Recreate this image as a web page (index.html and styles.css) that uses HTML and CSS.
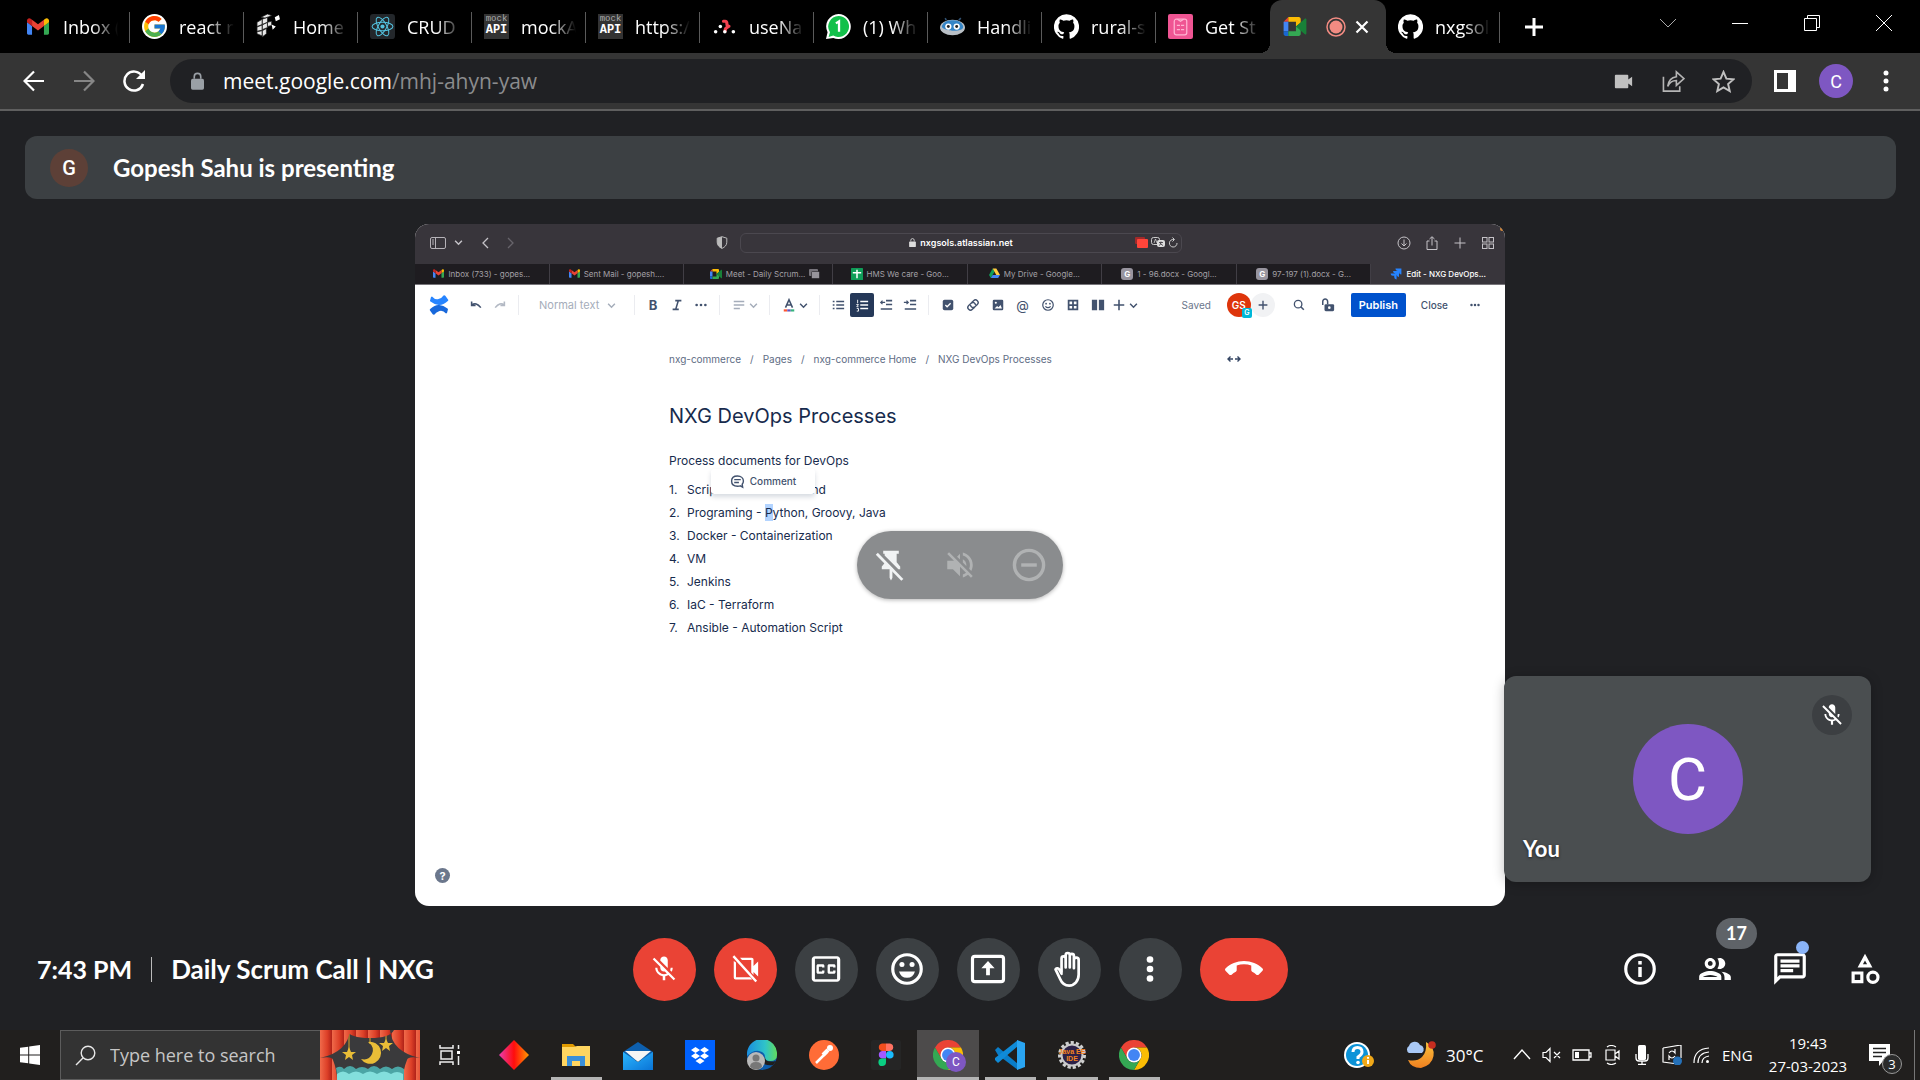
FILE: index.html
```html
<!DOCTYPE html>
<html lang="en">
<head>
<meta charset="utf-8">
<title>Meet - Daily Scrum Call | NXG</title>
<link rel="stylesheet" href="styles.css">
</head>
<body>
<svg class="sprite" aria-hidden="true">
  <defs>
    <linearGradient id="g-sky" x1="0" y1="0" x2="1" y2="1"><stop offset="0" stop-color="#2bb7ff"/><stop offset="1" stop-color="#0a74d6"/></linearGradient>
    <linearGradient id="g-edge" x1="0" y1="0" x2="1" y2="0"><stop offset="0" stop-color="#1a8fe0"/><stop offset=".6" stop-color="#2fc3c9"/><stop offset="1" stop-color="#62dc5c"/></linearGradient>
    <linearGradient id="g-diamond" x1="0" y1="0" x2="1" y2="0"><stop offset="0" stop-color="#e83db0"/><stop offset=".5" stop-color="#ff0d0d"/><stop offset="1" stop-color="#ff9a00"/></linearGradient>
    <linearGradient id="g-moon" x1="0" y1="0" x2="0" y2="1"><stop offset="0" stop-color="#fbc23c"/><stop offset="1" stop-color="#f08020"/></linearGradient>
    <linearGradient id="g-drape" x1="0" y1="0" x2="12" y2="0" gradientUnits="userSpaceOnUse" spreadMethod="repeat"><stop offset="0" stop-color="#f06a4a"/><stop offset=".6" stop-color="#dd4028"/><stop offset="1" stop-color="#b02218"/></linearGradient>
  </defs>
  <symbol id="gmail" viewBox="0 0 24 18"><path fill="#4285f4" d="M0 3v13.400c0 .9.700 1.600 1.600 1.600H5.500V8.500L0 4z"/><path fill="#34a853" d="M18.500 18h3.900c.9 0 1.600-.7 1.600-1.600V4l-5.500 4.500z"/><path fill="#fbbc04" d="M18.500 1.600V8.500L24 4.400V2.500C24 .2 21.500-1 19.600.700z"/><path fill="#ea4335" d="M5.500 8.500V1.600L12 6.500l6.500-4.900V8.500L12 13.400z"/><path fill="#c5221f" d="M0 2.500v1.900l5.500 4.100V1.600L4.400.700C2.500-1 0 .2 0 2.500z"/></symbol>
  <symbol id="google" viewBox="0 0 48 48"><circle cx="24" cy="24" r="24" fill="#fff"/><path fill="#FFC107" d="M43.611 20.083H42V20H24v8h11.303c-1.649 4.657-6.080 8-11.303 8-6.627 0-12-5.373-12-12s5.373-12 12-12c3.059 0 5.842 1.154 7.961 3.039l5.657-5.657C34.046 6.053 29.268 4 24 4 12.955 4 4 12.955 4 24s8.955 20 20 20 20-8.955 20-20c0-1.341-.138-2.650-.389-3.917z"/><path fill="#FF3D00" d="m6.306 14.691 6.571 4.819C14.655 15.108 18.961 12 24 12c3.059 0 5.842 1.154 7.961 3.039l5.657-5.657C34.046 6.053 29.268 4 24 4 16.318 4 9.656 8.337 6.306 14.691z"/><path fill="#4CAF50" d="M24 44c5.166 0 9.860-1.977 13.409-5.192l-6.190-5.238A11.910 11.910 0 0 1 24 36c-5.202 0-9.619-3.317-11.283-7.946l-6.522 5.025C9.505 39.556 16.227 44 24 44z"/><path fill="#1976D2" d="M43.611 20.083H42V20H24v8h11.303a12.040 12.040 0 0 1-4.087 5.571l6.190 5.238C36.971 39.205 44 34 44 24c0-1.341-.138-2.650-.389-3.917z"/></symbol>
  <symbol id="cube" viewBox="0 0 24 24"><g fill="#e8e8e8" stroke="#222" stroke-width=".7"><path d="M1 8l5-3v5l-5 2zM6 5l5-2v5L6 10zM11 8l4-1v4l-4 1zM1 12.500l5-2v5l-5 1zM6 10.500l5-2.500v5l-5 2zM1 17l5-1v5l-5-2zM6 16l4-2v5l-4 3zM5 3l6-3 4 1.500L9 4z"/></g><path fill="#fff" d="M18 3l4-2 1 4-4 2zM15 10l4 2-3 3z"/></symbol>
  <symbol id="react" viewBox="0 0 24 24"><rect width="24" height="24" rx="3" fill="#23272b"/><g fill="none" stroke="#53c1de" stroke-width="1"><ellipse cx="12" cy="12" rx="10" ry="4"/><ellipse cx="12" cy="12" rx="10" ry="4" transform="rotate(60 12 12)"/><ellipse cx="12" cy="12" rx="10" ry="4" transform="rotate(120 12 12)"/></g><circle cx="12" cy="12" r="2" fill="#53c1de"/></symbol>
  <symbol id="router" viewBox="0 0 24 24"><path d="M11 7h1.500q1.800 0 1.800 2.300t2 2.500M12.500 16.500q0-3.500 3.500-4.500" fill="none" stroke="#f44250" stroke-width="3" stroke-linecap="round"/><g fill="#fff"><circle cx="3.500" cy="17" r="1.700"/><circle cx="8" cy="12" r="1.700"/><circle cx="12.300" cy="17" r="1.700"/><circle cx="20.500" cy="17" r="1.700"/></g></symbol>
  <symbol id="whatsapp" viewBox="0 0 24 24"><path fill="#fff" d="M12 0a12 12 0 1 1-5 23L0 24l1.500-6.500A12 12 0 0 1 12 0z"/><path fill="#12c04a" d="M12 2a10 10 0 1 1-5 18.600L2.500 22l1.300-4.500A10 10 0 0 1 12 2z"/><path d="M9.500 9l3-2v10" fill="none" stroke="#fff" stroke-width="2.200"/></symbol>
  <symbol id="robot" viewBox="0 0 24 24"><path d="M6 6L5 4M18 6l2-2" stroke="#357" stroke-width="1.500"/><ellipse cx="12" cy="13" rx="12" ry="7.500" fill="#b9bfc5"/><path d="M2 11q2-5 10-5t10 5-10 5S0 15 2 11z" fill="#3585c6"/><circle cx="8" cy="12" r="3" fill="#fff"/><circle cx="16" cy="12" r="3" fill="#fff"/><circle cx="8" cy="12" r="1.400" fill="#222"/><circle cx="16" cy="12" r="1.400" fill="#222"/></symbol>
  <symbol id="github" viewBox="0 0 24 24"><path fill="#fff" d="M12 .3a12 12 0 0 0-3.800 23.400c.6.100.8-.3.800-.6v-2c-3.300.7-4-1.600-4-1.600-.6-1.400-1.400-1.800-1.400-1.800-1-.7.100-.7.100-.7 1.200 0 1.900 1.200 1.900 1.200 1 1.800 2.800 1.300 3.500 1 0-.8.400-1.300.7-1.600-2.700-.3-5.500-1.300-5.500-6 0-1.200.5-2.300 1.300-3.100-.2-.4-.6-1.600 0-3.200 0 0 1-.3 3.400 1.200a11.500 11.500 0 0 1 6 0c2.300-1.500 3.300-1.200 3.300-1.200.6 1.600.2 2.800 0 3.200.9.800 1.300 1.900 1.300 3.200 0 4.600-2.800 5.600-5.500 5.900.5.400.9 1 .9 2.200v3.300c0 .3.100.7.800.6A12 12 0 0 0 12 .3"/></symbol>
  <symbol id="clipboard" viewBox="0 0 24 24"><rect width="24" height="24" rx="2" fill="#ef5593"/><g fill="none" stroke="#ffb3d2" stroke-width="1.200"><rect x="6" y="5" width="12" height="15" rx="2"/><path d="M9 5l3 2 3-2M8.500 11h3M12.500 11h3M8.500 15h3M12.500 15h3"/></g></symbol>
  <symbol id="meet" viewBox="0 0 24 20"><path fill="#ea4335" d="M0 5l5-5v5z"/><path fill="#fbbc04" d="M5 0h11c1 0 2 1 2 2v4l-5 4V5H5z"/><path fill="#4285f4" d="M0 5h5v10H0z"/><path fill="#1967d2" d="M0 15h5v5H2c-1 0-2-1-2-2z"/><path fill="#34a853" d="M5 15h8v-5l5-3v11c0 1-1 2-2 2H5z"/><path fill="#188038" d="M13 10l9-8c1-.8 2-.3 2 .7v14.600c0 1-1 1.500-2 .7z"/></symbol>
  <symbol id="lock" viewBox="0 0 12 16"><rect y="6" width="12" height="10" rx="1.500" fill="currentColor"/><path d="M3 6V4a3 3 0 0 1 6 0v2" fill="none" stroke="currentColor" stroke-width="1.500"/></symbol>
  <symbol id="chev" viewBox="0 0 8 8"><path d="M1 2.500l3 3 3-3" fill="none" stroke="currentColor" stroke-width="1.300"/></symbol>
  <symbol id="mic-off" viewBox="0 0 24 24"><path fill="currentColor" d="M19 11h-1.700c0 .74-.16 1.430-.43 2.050l1.230 1.230c.56-.98.9-2.090.9-3.280zm-4.020.17c0-.06.02-.11.02-.17V5c0-1.660-1.340-3-3-3S9 3.340 9 5v.18l5.980 5.990zM4.270 3L3 4.270l6.010 6.010V11c0 1.660 1.330 3 2.990 3 .22 0 .44-.03.65-.08l1.660 1.660c-.71.33-1.500.52-2.310.52-2.760 0-5.300-2.100-5.300-5.100H5c0 3.410 2.720 6.230 6 6.720V21h2v-3.280c.91-.13 1.770-.45 2.540-.9L19.730 21 21 19.730 4.270 3z"/></symbol>
  <symbol id="drive" viewBox="0 0 24 22"><path fill="#0f9d58" d="M8 0L0 14l4 7 8-14z"/><path fill="#ffcd40" d="M8 0h8l8 14h-8z"/><path fill="#4285f4" d="M4 21h16l4-7H8z"/></symbol>
  <symbol id="sheets" viewBox="0 0 20 20"><rect width="20" height="20" rx="1" fill="#0f9d58"/><path d="M3 8h14M10 3v14" stroke="#fff" stroke-width="2.500"/></symbol>
  <symbol id="jira" viewBox="0 0 20 20"><path fill="#2684ff" d="M9 1h10v10a4 4 0 0 1-4-4V5h-2a4 4 0 0 1-4-4zM5 5h10v10a4 4 0 0 1-4-4V9H9a4 4 0 0 1-4-4zM1 9h10v10a4 4 0 0 1-4-4v-2H5a4 4 0 0 1-4-4z"/></symbol>
  <symbol id="chrome" viewBox="0 0 48 48"><path fill="#ea4335" d="M3.200 12A24 24 0 0 1 44.800 12H24L13.600 30z"/><path fill="#fbbc04" d="M44.800 12A24 24 0 0 1 24 48L34.400 30A12 12 0 0 0 24 12z"/><path fill="#34a853" d="M24 48A24 24 0 0 1 3.200 12L13.600 30A12 12 0 0 0 34.400 30z"/><circle cx="24" cy="24" r="12" fill="#fff"/><circle cx="24" cy="24" r="9.500" fill="#4285f4"/></symbol>
</svg>

<header class="browser">
  <nav class="tabstrip" aria-label="Browser tabs">
    <button class="tab"><svg class="fav"><use href="#gmail" x="1" y="4" width="22" height="17"/></svg><span class="fade">Inbox (</span></button>
    <button class="tab"><svg class="fav"><use href="#google"/></svg><span class="fade">react r</span></button>
    <button class="tab"><svg class="fav"><use href="#cube"/></svg><span class="fade">Home</span></button>
    <button class="tab"><svg class="fav"><use href="#react"/></svg><span class="fade">CRUD</span></button>
    <button class="tab"><span class="mock"><span>mock</span><b>API</b></span><span class="fade">mockA</span></button>
    <button class="tab"><span class="mock"><span>mock</span><b>API</b></span><span class="fade">https:/</span></button>
    <button class="tab"><svg class="fav"><use href="#router"/></svg><span class="fade">useNa</span></button>
    <button class="tab"><svg class="fav"><use href="#whatsapp"/></svg><span class="fade">(1) Wh</span></button>
    <button class="tab"><svg class="fav"><use href="#robot"/></svg><span class="fade">Handli</span></button>
    <button class="tab"><svg class="fav"><use href="#github"/></svg><span class="fade">rural-s</span></button>
    <button class="tab last"><svg class="fav"><use href="#clipboard"/></svg><span class="fade">Get St</span></button>
    <button class="tab active" aria-label="Meet">
      <svg class="fav"><use href="#meet" y="3" width="24" height="19"/></svg>
      <svg class="rec" viewBox="0 0 20 20"><circle cx="10" cy="10" r="9" fill="none" stroke="#f28b82" stroke-width="1.500"/><circle cx="10" cy="10" r="6.500" fill="#f28b82"/></svg>
      <svg class="x" viewBox="0 0 14 14"><path d="M1.500 1.500l11 11M12.500 1.500l-11 11" stroke="#fff" stroke-width="2.200"/></svg>
    </button>
    <button class="tab"><svg class="fav"><use href="#github"/></svg><span class="fade">nxgsol</span></button>
    <button class="newtab" aria-label="New tab"><svg viewBox="0 0 20 20" width="20" height="20"><path d="M10 1v18M1 10h18" stroke="#fff" stroke-width="3"/></svg></button>
    <div class="winctl">
      <button aria-label="Search tabs"><svg viewBox="0 0 16 16"><path d="M0 4l8 8 8-8" fill="none" stroke="#aaa"/></svg></button>
      <button aria-label="Minimize"><svg viewBox="0 0 16 16"><path d="M0 8.500h16" stroke="#fff"/></svg></button>
      <button aria-label="Restore"><svg viewBox="0 0 16 16"><path d="M.5 3.500h12v12H.5zM3.500 3.500v-3h12v12h-3" fill="none" stroke="#fff"/></svg></button>
      <button aria-label="Close"><svg viewBox="0 0 16 16"><path d="M0 0l16 16M16 0L0 16" stroke="#fff"/></svg></button>
    </div>
  </nav>
  <div class="toolbar">
    <button class="nav" aria-label="Back"><svg viewBox="0 0 22 22"><path d="M21 11H2M11 1.500L1.500 11l9.500 9.500" fill="none" stroke="#fff" stroke-width="2.200"/></svg></button>
    <button class="nav" aria-label="Forward"><svg viewBox="0 0 22 22"><path d="M1 11h19M11 1.500l9.500 9.500-9.500 9.500" fill="none" stroke="#868686" stroke-width="2.200"/></svg></button>
    <button class="nav" aria-label="Reload"><svg viewBox="0 0 22 22"><path d="M19 6A9.500 9.500 0 1 0 20 14" fill="none" stroke="#fff" stroke-width="2.500"/><path d="M22 0v9h-9z" fill="#fff"/></svg></button>
    <div class="omnibox">
      <svg class="olock"><use href="#lock"/></svg>
      <span class="url" role="textbox" aria-label="Address" contenteditable="true" spellcheck="false">meet.google.com<span class="path">/mhj-ahyn-yaw</span></span>
      <button aria-label="Camera"><svg viewBox="0 0 24 24"><path fill="#c0c0c0" d="M4 5h12a1 1 0 0 1 1 1v4l4-3v10l-4-3v4a1 1 0 0 1-1 1H4a1 1 0 0 1-1-1V6a1 1 0 0 1 1-1z"/></svg></button>
      <button aria-label="Share"><svg viewBox="0 0 24 24"><path fill="none" stroke="#b5b5b5" stroke-width="1.700" d="M1.500 7v15h17v-5M6 17q1-9 9-10V2l8 7-8 7v-5q-6 0-9 6z"/></svg></button>
      <button aria-label="Bookmark"><svg viewBox="0 0 24 24"><path fill="none" stroke="#c0c0c0" stroke-width="2" d="M12 2l3 7 7.500.7-5.700 5 1.700 7.300-6.500-3.900L5.500 22l1.700-7.300-5.700-5L9 9z"/></svg></button>
    </div>
    <button class="tool" aria-label="Side panel"><svg viewBox="0 0 22 22"><path fill="#fff" fill-rule="evenodd" d="M0 0h22v22H0zM3 3v16h11V3z"/></svg></button>
    <button class="profile">C</button>
    <button class="tool" aria-label="Menu"><svg viewBox="0 0 22 22"><g fill="#fff"><circle cx="11" cy="3" r="2.500"/><circle cx="11" cy="11" r="2.500"/><circle cx="11" cy="19" r="2.500"/></g></svg></button>
  </div>
</header>

<main class="meet">
  <div class="banner"><span class="banner-av">G</span><span>Gopesh Sahu is presenting</span></div>

  <section class="stage">
    <div class="share">
      <div class="saf-bar">
        <div class="saf-left">
          <svg width="16" height="12" viewBox="0 0 16 12"><rect x=".5" y=".5" width="15" height="11" rx="1.500" fill="none" stroke="#b5b2b8"/><path d="M5.500 0v12M2 3h2M2 5h2M2 7h2" stroke="#b5b2b8"/></svg>
          <svg class="mg" width="9" height="9" color="#c5c3c8"><use href="#chev"/></svg>
          <svg width="8" height="12" viewBox="0 0 8 12"><path d="M7 1L2 6l5 5" fill="none" stroke="#c5c3c8" stroke-width="1.300"/></svg>
          <svg width="8" height="12" viewBox="0 0 8 12"><path d="M1 1l5 5-5 5" fill="none" stroke="#67646b" stroke-width="1.300"/></svg>
        </div>
        <div class="saf-mid">
          <svg width="12" height="13" viewBox="0 0 12 13"><path d="M6 .7l4.800 1.500v4c0 3-2 5-4.800 6.200C3.200 11.200 1.200 9.200 1.200 6.200v-4z" fill="none" stroke="#bbb"/><path d="M6 .7v11.700C3.200 11.200 1.200 9.200 1.200 6.200v-4z" fill="#bbb"/></svg>
          <div class="saf-url">
            <svg width="7" height="9" color="#ddd"><use href="#lock"/></svg><span>nxgsols.atlassian.net</span>
            <div class="saf-ext">
              <svg width="13" height="11" viewBox="0 0 13 11"><rect width="10" height="7" rx="1" fill="#a02a2a"/><rect x="2" y="2" width="11" height="9" rx="1" fill="#ff453a"/></svg>
              <svg width="14" height="11" viewBox="0 0 14 11"><rect x=".5" y=".5" width="8" height="7" rx="2" fill="none" stroke="#ccc"/><path d="M3 6l1.500-4L6 6" fill="none" stroke="#ccc" stroke-width=".8"/><rect x="6" y="3" width="8" height="7" rx="2" fill="#ddd"/><path d="M8 5.500h4M10 4.500v1q0 2-2 3M9 6.500l3 2" fill="none" stroke="#38353b" stroke-width=".8"/></svg>
              <svg width="10" height="11" viewBox="0 0 10 11"><path d="M6 2.500A3.800 3.800 0 1 0 9 6M4.500.5l2 2-2 2" fill="none" stroke="#ccc"/></svg>
            </div>
          </div>
        </div>
        <div class="saf-right">
          <svg width="14" height="14" viewBox="0 0 14 14"><g fill="none" stroke="#c5c3c8"><circle cx="7" cy="7" r="6"/><path d="M7 3.500v6M4.500 7.500L7 10l2.500-2.500"/></g></svg>
          <svg width="14" height="14" viewBox="0 0 14 14"><path d="M4.500 5H2v8.500h10V5H9.500M7 9.500V1M4.500 3L7 .7 9.500 3" fill="none" stroke="#c5c3c8"/></svg>
          <svg width="14" height="14" viewBox="0 0 14 14"><path d="M7 1.500v11M1.500 7h11" stroke="#c5c3c8"/></svg>
          <svg width="14" height="14" viewBox="0 0 14 14"><g fill="none" stroke="#c5c3c8"><rect x="1.500" y="1.500" width="4.500" height="4.500"/><rect x="8" y="1.500" width="4.500" height="4.500"/><rect x="1.500" y="8" width="4.500" height="4.500"/><rect x="8" y="8" width="4.500" height="4.500"/></g></svg>
        </div>
        <span class="spot"></span>
      </div>
      <nav class="saf-tabs" aria-label="Shared tabs">
        <span><svg width="11" height="9"><use href="#gmail"/></svg>Inbox (733) - gopes...</span>
        <span><svg width="11" height="9"><use href="#gmail"/></svg>Sent Mail - gopesh....</span>
        <span class="play"><svg width="12" height="10"><use href="#meet"/></svg>Meet - Daily Scrum...<svg width="11" height="10" viewBox="0 0 11 10"><rect width="9" height="7" rx="1" fill="#77747b"/><rect x="2.500" y="2.500" width="8" height="7" rx="1" fill="#97949b" stroke="#1e1c20" stroke-width=".6"/></svg></span>
        <span><svg width="12" height="12"><use href="#sheets"/></svg>HMS We care - Goo...</span>
        <span><svg width="11" height="11"><use href="#drive"/></svg>My Drive - Google...</span>
        <span><b>G</b>1 - 96.docx - Googl...</span>
        <span><b>G</b>97-197 (1).docx - G...</span>
        <span class="on"><svg width="12" height="12"><use href="#jira"/></svg>Edit - NXG DevOps...</span>
      </nav>

      <div class="editor">
        <div class="ed-bar">
          <svg class="logo" viewBox="0 0 20 20"><path fill="#2684ff" d="M3 1.500Q6 5 9.500 4t5-3.500q1-.6 1.800.2L19 4.500q.6.800-.2 1.500-5 4.500-9 4-4.200-.3-8.300-3.500-.8-.6-.3-1.500L2 2z"/><path fill="#1868db" d="M17 18.500Q14 15 10.500 16t-5 3.500q-1 .6-1.800-.2L1 15.500q-.6-.8.200-1.500 5-4.500 9-4 4.200.3 8.300 3.500.8.600.3 1.500L18 18z"/></svg>
          <button class="ic" aria-label="Undo"><svg viewBox="0 0 16 16"><path d="M3 4v4.500h4.500M3.300 8Q8 4 13.500 11" fill="none" stroke="#42526e" stroke-width="1.800"/></svg></button>
          <button class="ic" aria-label="Redo"><svg viewBox="0 0 16 16"><path d="M13 4v4.500H8.500M12.700 8Q8 4 2.500 11" fill="none" stroke="#b3b9c4" stroke-width="1.800"/></svg></button>
          <i class="sep"></i>
          <label class="style"><select aria-label="Text style"><option>Normal text</option></select><svg width="9" height="9"><use href="#chev"/></svg></label>
          <i class="sep"></i>
          <button class="ic" aria-label="Bold"><b>B</b></button>
          <button class="ic" aria-label="Italic"><svg viewBox="0 0 16 16"><path d="M6 3h7M3 13h7M9.500 3l-3 10" stroke="#42526e" stroke-width="1.800"/></svg></button>
          <button class="ic" aria-label="More formatting"><svg viewBox="0 0 16 16"><g fill="#42526e"><circle cx="3" cy="8" r="1.500"/><circle cx="8" cy="8" r="1.500"/><circle cx="13" cy="8" r="1.500"/></g></svg></button>
          <i class="sep"></i>
          <button class="drop pale" aria-label="Align"><svg viewBox="0 0 16 16"><path d="M2 4h12M2 8h12M2 12h7" stroke="#a5adba" stroke-width="1.700"/></svg><svg class="ch"><use href="#chev"/></svg></button>
          <i class="sep"></i>
          <button class="drop" aria-label="Text color"><svg viewBox="0 0 16 16"><path d="M4 11L8 2l4 9M5.500 8h5" fill="none" stroke="#42526e" stroke-width="1.800"/><path d="M2 14.200h4" stroke="#ff5630" stroke-width="2.500"/><path d="M6 14.200h4" stroke="#6554c0" stroke-width="2.500"/><path d="M10 14.200h4" stroke="#36b37e" stroke-width="2.500"/></svg><svg class="ch"><use href="#chev"/></svg></button>
          <i class="sep"></i>
          <button class="ic" aria-label="Bullets"><svg viewBox="0 0 16 16"><path d="M6 4h9M6 8h9M6 12h9M2 4h2M2 8h2M2 12h2" stroke="#42526e" stroke-width="1.800"/></svg></button>
          <button class="ic sel" aria-label="Numbers"><svg viewBox="0 0 16 16"><path d="M6 4h9M6 8h9M6 12h9" stroke="#fff" stroke-width="1.800"/><path d="M3 2v4M1.500 7.500H4L2 10h2M2 12h2v3H2" fill="none" stroke="#fff"/></svg></button>
          <button class="ic" aria-label="Outdent"><svg viewBox="0 0 16 16"><path d="M8 3h7M8 7.500h7M2 12.500h13" stroke="#42526e" stroke-width="1.800"/><path d="M7 5H2m2-2L2 5l2 2" fill="none" stroke="#42526e" stroke-width="1.400"/></svg></button>
          <button class="ic" aria-label="Indent"><svg viewBox="0 0 16 16"><path d="M8 3h7M8 7.500h7M2 12.500h13" stroke="#42526e" stroke-width="1.800"/><path d="M1 5h5M4 3l2 2-2 2" fill="none" stroke="#42526e" stroke-width="1.400"/></svg></button>
          <i class="sep"></i>
          <div class="inserts">
            <button class="ic" aria-label="Action item"><svg viewBox="0 0 16 16"><rect x="2" y="2" width="12" height="12" rx="2" fill="#42526e"/><path d="M5 8l2 2 4-4" fill="none" stroke="#fff" stroke-width="1.500"/></svg></button>
            <button class="ic" aria-label="Link"><svg viewBox="0 0 16 16"><g fill="none" stroke="#42526e" stroke-width="1.600" transform="rotate(-45 8 8)"><path d="M7 11H4a3 3 0 0 1 0-6h4a3 3 0 0 1 2 5"/><path d="M9 5h3a3 3 0 0 1 0 6H8a3 3 0 0 1-2-5"/></g></svg></button>
            <button class="ic" aria-label="Image"><svg viewBox="0 0 16 16"><rect x="2" y="2" width="12" height="12" rx="1.500" fill="#42526e"/><path d="M4 12l3-3 1.500 1.500L11 8l1.500 4z" fill="#fff"/><circle cx="5.500" cy="5.500" r="1.200" fill="#fff"/></svg></button>
            <button class="ic at" aria-label="Mention">@</button>
            <button class="ic" aria-label="Emoji"><svg viewBox="0 0 16 16"><circle cx="8" cy="8" r="6" fill="none" stroke="#42526e" stroke-width="1.400"/><circle cx="5.800" cy="6.500" r="1" fill="#42526e"/><circle cx="10.200" cy="6.500" r="1" fill="#42526e"/><path d="M5 9.500q3 3 6 0" fill="none" stroke="#42526e" stroke-width="1.300"/></svg></button>
            <button class="ic" aria-label="Table"><svg viewBox="0 0 16 16"><path d="M3 3h10v10H3zM8 3v10M3 8h10" fill="none" stroke="#42526e" stroke-width="2"/></svg></button>
            <button class="ic" aria-label="Layouts"><svg viewBox="0 0 16 16"><path d="M1 2h6v12H1zM9 2h6v12H9z" fill="#42526e"/></svg></button>
          </div>
          <button class="drop ins" aria-label="Insert"><svg viewBox="0 0 16 16"><path d="M8 2v12M2 8h12" stroke="#42526e" stroke-width="1.800"/></svg><svg class="ch"><use href="#chev"/></svg></button>
          <span class="saved">Saved</span>
          <span class="gs">GS<em>G</em></span>
          <button class="invite" aria-label="Invite"><svg viewBox="0 0 16 16"><path d="M8 3v10M3 8h10" stroke="#42526e" stroke-width="1.600"/></svg></button>
          <button class="ic" aria-label="Find"><svg viewBox="0 0 16 16"><circle cx="7" cy="7" r="4.300" fill="none" stroke="#42526e" stroke-width="1.500"/><path d="M10 10L13.500 13.500" stroke="#42526e" stroke-width="1.800"/></svg></button>
          <button class="ic unlock" aria-label="Restrictions"><svg viewBox="0 0 16 16"><rect x="4" y="7" width="11" height="8" rx="1.500" fill="#42526e"/><path d="M2 8V4a2.800 2.800 0 0 1 5.600 0v3" fill="none" stroke="#42526e" stroke-width="1.700"/><circle cx="9.500" cy="11" r="1.500" fill="#fff"/></svg></button>
          <button class="publish">Publish</button>
          <button class="closebtn">Close</button>
          <button class="ic" aria-label="More actions"><svg viewBox="0 0 16 16"><g fill="#42526e"><circle cx="4" cy="8" r="1.400"/><circle cx="8" cy="8" r="1.400"/><circle cx="12" cy="8" r="1.400"/></g></svg></button>
        </div>

        <article class="doc">
          <div class="crumbs"><a href="#">nxg-commerce</a><i>/</i><a href="#">Pages</a><i>/</i><a href="#">nxg-commerce Home</a><i>/</i><a href="#">NXG DevOps Processes</a>
            <svg class="wide" viewBox="0 0 14 8"><path d="M6 4H1m2.500-2.500L1 4l2.500 2.500M8 4h5m-2.500-2.500L13 4l-2.500 2.500" fill="none" stroke="#344563" stroke-width="1.400"/></svg>
          </div>
          <h1>NXG DevOps Processes</h1>
          <p>Process documents for DevOps</p>
          <ol>
            <li>Scripts - Unix Command<button class="comment"><svg viewBox="0 0 16 16"><path d="M8 2.200c3.800 0 6.300 2.200 6.300 5.300 0 1.500-.5 2.600-1.300 3.500l.5 3-2.500-1.400c-1 .4-2 .4-3 .4-3.800 0-6.300-2.200-6.300-5.500S4.200 2.200 8 2.200zM4.500 6h7M4.500 9h5" fill="none" stroke="#42526e" stroke-width="1.500"/></svg>Comment</button></li>
            <li>Programing - <mark>P</mark>ython, Groovy, Java</li>
            <li>Docker - Containerization</li>
            <li>VM</li>
            <li>Jenkins</li>
            <li>IaC - Terraform</li>
            <li>Ansible - Automation Script</li>
          </ol>
        </article>
        <button class="help" aria-label="Help">?</button>
      </div>

      <div class="pill">
        <button aria-label="Unpin"><svg viewBox="0 0 24 24"><path fill="#f1f3f4" d="M6.500 2h11v2H16v6l2.500 3v2h-1.300L7.500 5.300V4h-1zM8 9.200L13.800 15H13v6l-1 2-1-2v-6H5.500v-2L8 10z"/><path d="M2 4l18 18.500" stroke="#f1f3f4" stroke-width="2"/></svg></button>
        <button aria-label="Mute"><svg viewBox="0 0 24 24"><path fill="#b0b2b3" d="M16.500 12c0-1.770-1.020-3.290-2.500-4.030v2.210l2.450 2.450c.03-.2.050-.41.050-.63zm2.500 0c0 .94-.2 1.820-.54 2.640l1.510 1.510C20.630 14.910 21 13.500 21 12c0-4.280-2.990-7.860-7-8.770v2.060c2.890.86 5 3.540 5 6.710zM4.270 3L3 4.270 7.730 9H3v6h4l5 5v-6.730l4.250 4.250c-.67.52-1.420.93-2.250 1.180v2.060c1.380-.31 2.630-.95 3.690-1.810L19.730 21 21 19.730l-9-9L4.270 3zM12 4L9.910 6.090 12 8.180V4z"/></svg></button>
        <button aria-label="Remove"><svg viewBox="0 0 24 24"><circle cx="12" cy="12" r="10.300" fill="none" stroke="#b0b2b3" stroke-width="2.400"/><path d="M6.500 12h11" stroke="#b0b2b3" stroke-width="2.400"/></svg></button>
      </div>
    </div>

    <aside class="self">
      <span class="self-av">C</span>
      <span class="self-mic"><svg width="26" height="26"><use href="#mic-off"/></svg></span>
      <span class="self-name">You</span>
    </aside>
  </section>

  <footer class="controls">
    <div class="info"><time>7:43 PM</time><i></i><span>Daily Scrum Call | NXG</span></div>
    <div class="buttons">
      <button class="rnd red" aria-label="Turn on microphone"><svg class="s30"><use href="#mic-off"/></svg></button>
      <button class="rnd red" aria-label="Turn on camera"><svg class="s30" viewBox="0 0 24 24"><path fill="#fff" fill-rule="evenodd" d="M2 2.300L3.400 1l18.300 20.300-1.400 1.300zM3 5.500l1.800 1.300V18.500h11.400l1.600 1.800H4.500A1.500 1.500 0 0 1 3 18.800zM8 3h9.300c.9 0 1.500.6 1.500 1.500V9.500L22.500 6v12l-3.700-3.700v2.500L17 14.800V4.800H9.600z"/></svg></button>
      <button class="rnd" aria-label="Captions"><svg class="s38" viewBox="0 0 24 24"><path fill="#fff" d="M19 4H5c-1.110 0-2 .9-2 2v12c0 1.100.89 2 2 2h14c1.100 0 2-.9 2-2V6c0-1.100-.9-2-2-2zm0 14.500H5v-13h14v13zM7 15h3c.55 0 1-.45 1-1v-1H9.500v.5h-2v-3h2v.5H11v-1c0-.55-.45-1-1-1H7c-.55 0-1 .45-1 1v4c0 .55.450 1 1 1zm7 0h3c.55 0 1-.45 1-1v-1h-1.500v.5h-2v-3h2v.5H18v-1c0-.55-.45-1-1-1h-3c-.55 0-1 .45-1 1v4c0 .55.45 1 1 1z"/></svg></button>
      <button class="rnd" aria-label="Reactions"><svg class="s38" viewBox="0 0 24 24"><circle cx="12" cy="12" r="9" fill="none" stroke="#fff" stroke-width="2"/><circle cx="8.800" cy="9.200" r="1.600" fill="#fff"/><circle cx="15.200" cy="9.200" r="1.600" fill="#fff"/><path d="M7 13.500h10q-1 4-5 4t-5-4z" fill="#fff"/></svg></button>
      <button class="rnd" aria-label="Present"><svg class="s38" viewBox="0 0 24 24"><rect x="2.200" y="4" width="19.600" height="16" rx="1.500" fill="none" stroke="#fff" stroke-width="2"/><path d="M12 7l4.200 4.500H13.200V16h-2.400v-4.500H7.800z" fill="#fff"/></svg></button>
      <button class="rnd" aria-label="Raise hand"><svg class="s38" viewBox="0 0 24 24"><g fill="none" stroke="#fff" stroke-width="1.700" stroke-linecap="round" stroke-linejoin="round"><path d="M7.300 14V5.300a1.300 1.300 0 0 1 2.600 0V11V3.200a1.300 1.300 0 0 1 2.600 0V11V3.800a1.300 1.300 0 0 1 2.600 0V11.500V6.300a1.300 1.300 0 0 1 3 0V15.500c0 4-2.500 7-6 7-3 0-4.600-1.500-5.700-4.200L3.500 12.200c.8-1 2-.6 2.500.3L7.300 15"/></g></svg></button>
      <button class="rnd" aria-label="More options"><svg class="s38" viewBox="0 0 24 24"><g fill="#fff"><circle cx="12" cy="6" r="2.100"/><circle cx="12" cy="12" r="2.100"/><circle cx="12" cy="18" r="2.100"/></g></svg></button>
      <button class="rnd red leave" aria-label="Leave call"><svg class="s38" viewBox="0 0 24 24"><path fill="#fff" d="M12 9c-1.600 0-3.150.25-4.600.72v3.100c0 .39-.23.74-.56.9-.98.49-1.870 1.120-2.660 1.850-.18.18-.43.28-.7.28-.28 0-.53-.11-.71-.29L.29 13.080c-.18-.17-.29-.42-.29-.7 0-.28.110-.53.290-.71C3.340 8.780 7.460 7 12 7s8.660 1.780 11.710 4.670c.18.180.29.430.29.710 0 .28-.11.530-.29.710l-2.480 2.480c-.18.180-.43.290-.71.290-.27 0-.52-.11-.7-.28-.79-.74-1.690-1.360-2.670-1.850-.33-.16-.56-.5-.56-.9v-3.100C15.150 9.250 13.600 9 12 9z"/></svg></button>
    </div>
    <div class="panels">
      <button aria-label="Meeting details"><svg viewBox="0 0 24 24"><circle cx="12" cy="12" r="9" fill="none" stroke="#fff" stroke-width="2"/><path d="M12 10.800V17M12 7v2.200" stroke="#fff" stroke-width="2.200"/></svg></button>
      <button aria-label="People"><svg viewBox="0 0 24 24"><path fill="#fff" d="M9 13.250c-2.340 0-7 1.170-7 3.500V19h14v-2.250c0-2.330-4.660-3.500-7-3.500zM4.340 17c.84-.58 2.870-1.250 4.660-1.250s3.820.67 4.660 1.250H4.340zM9 12c1.930 0 3.500-1.570 3.500-3.500S10.930 5 9 5 5.500 6.570 5.500 8.500 7.070 12 9 12zm0-5c.83 0 1.500.67 1.500 1.500S9.830 10 9 10s-1.500-.67-1.500-1.500S8.170 7 9 7zm7.040 6.810c1.160.84 1.960 1.960 1.960 3.440V19h4v-1.750c0-2.020-3.500-3.170-5.960-3.440zM15 12c1.930 0 3.500-1.570 3.500-3.500S16.930 5 15 5c-.54 0-1.040.13-1.500.35.63.89 1 1.980 1 3.150s-.37 2.260-1 3.150c.46.22.96.35 1.500.35z"/></svg><span class="badge">17</span></button>
      <button aria-label="Chat"><svg viewBox="0 0 24 24"><path fill="#fff" d="M4 4h16v12H5.170L4 17.170V4m0-2c-1.100 0-1.990.9-1.990 2L2 22l4-4h14c1.100 0 2-.9 2-2V4c0-1.100-.9-2-2-2H4zm2 10h8v2H6v-2zm0-3h12v2H6V9zm0-3h12v2H6V6z"/></svg><span class="dot"></span></button>
      <button aria-label="Activities"><svg viewBox="0 0 24 24"><path d="M12 4.500l3 5.500H9zM4.500 14.500H10V20H4.500z" fill="none" stroke="#fff" stroke-width="2"/><circle cx="17" cy="17.200" r="3.200" fill="none" stroke="#fff" stroke-width="2"/></svg></button>
    </div>
  </footer>
</main>

<footer class="taskbar">
  <button class="start" aria-label="Start"><svg viewBox="0 0 20 20"><path fill="#fff" d="M0 2.800l8.200-1.100v7.800H0zM9.200 1.500L20 0v9.500H9.200zM0 10.500h8.200v7.800L0 17.200zM9.200 10.500H20V20L9.200 18.500z"/></svg></button>
  <label class="search">
    <svg width="21" height="21" viewBox="0 0 21 21"><circle cx="13" cy="8" r="6.800" fill="none" stroke="#e8e8e8" stroke-width="1.400"/><path d="M8.200 12.800L1 20" stroke="#e8e8e8" stroke-width="1.400"/></svg>
    <input type="text" placeholder="Type here to search" aria-label="Search">
    <svg class="art" viewBox="0 0 100 50" preserveAspectRatio="none"><rect width="100" height="50" fill="#3a3a3c"/><path d="M29 2v18M50 4v10M66 4v8" stroke="#d9a928"/><path fill="url(#g-drape)" d="M26 0h48q-4 8-24 8T26 0zM0 0h30q-2 22-30 28zM100 0H70q2 22 30 28zM0 28q12-2 13 2 4 10 4 20H0zM100 28q-12-2-13 2-4 10-4 20h17z"/><path fill="#4ba5a5" d="M16 38q5-3 8 1 6-6 12 0 6-4 12 0 6-6 12 0 6-5 12 0 6-5 12 0v11H18z"/><path fill="#83dfdc" d="M17 44q6-5 12 0 7-5 14 0 7-5 14 0 7-5 14 0 6-4 12 0v6H17z"/><path fill="#e9bd37" d="M48 12a11 11 0 1 1-7 17q8 2 11-5t-4-12zM29 17l2 5h5l-4 3 1 5-4-3-4 3 1-5-4-3h5zM66 9l2 4h5l-4 3 1 5-4-3-4 3 1-5-4-3h5z"/></svg>
  </label>
  <button class="app tv" aria-label="Task view"><svg width="22" height="20" viewBox="0 0 22 20"><path d="M1 0v3h13V0M1 20v-3h13v3M2 6h11v8H2zM19.500 0v4M19.500 11v9" fill="none" stroke="#eee" stroke-width="1.500"/><path d="M18 6h3v3h-3z" fill="#fff"/></svg></button>
  <div class="apps">
    <button class="app" aria-label="Diamond"><svg viewBox="0 0 30 30"><path fill="url(#g-diamond)" d="M15 0l15 15-15 15L0 15z"/></svg></button>
    <button class="app run" aria-label="File Explorer"><svg viewBox="0 0 30 30"><path fill="#e09a00" d="M1 4h11l3 3v4H1z"/><path fill="#ffd560" d="M1 7h12l3-1h13v20H1z"/><path fill="#3a8fd8" d="M6 16h18v10h-5v-5h-8v5H6z"/></svg></button>
    <button class="app" aria-label="Mail"><svg viewBox="0 0 30 30"><path fill="#0d5fae" d="M0 12L15 2l15 10v8H0z"/><path fill="#f4f4f4" d="M2 11h26L15 22z"/><path fill="url(#g-sky)" d="M0 12l15 10L30 12v18H0z"/></svg></button>
    <button class="app" aria-label="Dropbox"><svg viewBox="0 0 30 30"><path fill="#0061fe" d="M0 0h30v30H0z"/><path fill="#fff" d="M10.500 7l4.500 3-4.500 3L6 10zM19.500 7l4.500 3-4.500 3-4.500-3zM10.500 13l4.500 3-4.500 3L6 16zM19.500 13l4.500 3-4.500 3-4.500-3zM15 18l4.500 3-4.500 3-4.500-3z"/></svg></button>
    <button class="app" aria-label="Edge"><svg viewBox="0 0 30 30"><circle cx="15" cy="15" r="15" fill="#0d5cab"/><path fill="url(#g-edge)" d="M0 13A15 15 0 0 1 30 15q0 6-7 6-6 0-5-4 0-5-6-6T0 16z"/><path fill="#1f1d1c" d="M18 17q0 6 11 4l-3 4q-8 1-11-3z"/><circle cx="9" cy="21" r="9" fill="#b9b9b9"/><circle cx="9" cy="18" r="3.500" fill="#777"/><path d="M3 27q0-5 6-5t6 5q-6 5-12 0z" fill="#777"/></svg></button>
    <button class="app" aria-label="Postman"><svg viewBox="0 0 30 30"><circle cx="15" cy="15" r="15" fill="#ff6c37"/><path d="M7 23l11-11" stroke="#fff" stroke-width="2.500"/><path d="M14 15l5-5" stroke="#fff" stroke-width="4"/><circle cx="21" cy="8" r="3" fill="#fff"/></svg></button>
    <button class="app" aria-label="Figma"><svg viewBox="0 0 30 30"><rect width="30" height="30" rx="2" fill="#252525"/><path fill="#f24e1e" d="M15 3.500h-4a3.800 3.800 0 0 0 0 7.500h4z"/><path fill="#ff7262" d="M15 3.500h4a3.800 3.800 0 0 1 0 7.500h-4z"/><path fill="#a259ff" d="M15 11h-4a3.800 3.800 0 0 0 0 7.500h4z"/><circle cx="18.800" cy="14.800" r="3.800" fill="#1abcfe"/><path fill="#0acf83" d="M15 18.500h-4a3.800 3.800 0 1 0 4 3.800z"/></svg></button>
    <button class="app run cur" aria-label="Google Chrome, C"><svg viewBox="0 0 30 30"><use href="#chrome"/></svg><span class="mini">C</span></button>
    <button class="app run" aria-label="Visual Studio Code"><svg viewBox="0 0 30 30"><path fill="#0a7dc8" d="M0 10l3-3 20 17v6L3 15z"/><path fill="#0f8bd8" d="M0 20l3 3L23 6V0L0 18z"/><path fill="#2aa5f2" d="M22 0l8 3v24l-8 3z"/></svg></button>
    <button class="app run" aria-label="Eclipse"><svg viewBox="0 0 30 30"><circle cx="15" cy="15" r="12.500" fill="none" stroke="#d0d0d0" stroke-width="3" stroke-dasharray="3.200 2"/><circle cx="15" cy="15" r="10.500" fill="#2c2148" stroke="#c9c9c9" stroke-width="2"/><text x="15" y="14" text-anchor="middle" fill="#f58220" font-family="Liberation Sans" font-weight="700" font-size="7">Java EE</text><text x="15" y="21" text-anchor="middle" fill="#f58220" font-family="Liberation Sans" font-weight="700" font-size="7">IDE</text></svg></button>
    <button class="app run" aria-label="Google Chrome"><svg viewBox="0 0 30 30"><use href="#chrome"/></svg></button>
  </div>
  <div class="tray">
    <svg class="t30" viewBox="0 0 30 28"><circle cx="13" cy="14" r="13" fill="#fff"/><circle cx="13" cy="14" r="11" fill="#0c93d8"/><path d="M9 11q0-4.500 4.500-4.500T18 11q0 2.500-4 5v2" fill="none" stroke="#fff" stroke-width="3"/><circle cx="14" cy="21.500" r="1.800" fill="#fff"/><circle cx="24" cy="20" r="6" fill="#f0a818"/><path d="M24 19v4M24 16v1.700" stroke="#fff" stroke-width="2"/></svg>
    <svg class="moon" viewBox="0 0 30 28"><path fill="url(#g-moon)" d="M20 1q9 5 7.500 14T15 27Q5 27 2 19q9 2 14-3t4-15z"/><path fill="#a9c8f5" d="M3 12a4 4 0 0 1 0-7 6 6 0 0 1 11-1 4.500 4.500 0 0 1 2 8z"/><circle cx="26" cy="4" r="3.800" fill="#c62d20"/></svg>
    <span class="temp">30°C</span>
    <svg class="ti" viewBox="0 0 20 20"><path d="M2 14l8-9 8 9" fill="none" stroke="#fff" stroke-width="1.400"/></svg>
    <svg class="ti" viewBox="0 0 20 20"><path d="M1 7.500h3l4-4v13l-4-4H1zM12 7l6 6M18 7l-6 6" fill="none" stroke="#fff" stroke-width="1.200"/></svg>
    <svg class="ti" viewBox="0 0 20 20"><path d="M1 5h16v10H1zM17 8h2v4h-2" fill="none" stroke="#fff" stroke-width="1.300"/><path d="M3 7h4v6H3z" fill="#fff"/></svg>
    <svg class="ti" viewBox="0 0 20 20"><path d="M4 5h9v10H4zM13 9l4-3v8l-4-3M5 2q4-3 9 0M5 18q4 3 9 0" fill="none" stroke="#fff" stroke-width="1.200"/></svg>
    <svg class="ti" viewBox="0 0 20 20"><rect x="6" y="0" width="8" height="15" rx="1.500" fill="#fff"/><path d="M4 9v4q0 3 3 3h6q3 0 3-3V9M10 16v3M6 19.300h8" fill="none" stroke="#fff" stroke-width="1.300"/></svg>
    <svg class="ti" viewBox="0 0 20 20"><path d="M1 3l18-3v13M1 3v14l11 1.500M7 8q3-4 6 0V4M13 11q-3 4-6 0v4" fill="none" stroke="#fff" stroke-width="1.200"/><circle cx="15.500" cy="16" r="4.500" fill="#2571b9"/></svg>
    <svg class="ti" viewBox="0 0 20 20"><path d="M2 18Q2 4 17 3M6 18q0-10 11-11M10 18q0-6 7-7" fill="none" stroke="#fff" stroke-width="1.200"/><circle cx="15.500" cy="16.500" r="1.500" fill="#fff"/></svg>
    <span class="lang">ENG</span>
    <span class="clock"><span>19:43</span><span>27-03-2023</span></span>
    <button class="notif" aria-label="Notifications"><svg viewBox="0 0 22 22"><path fill="#fff" d="M0 0h21v17h-7l-4 5v-5H0z"/><path d="M4 4.500h13M4 8.500h13M4 12.500h9" stroke="#222" stroke-width="1.300"/></svg><span>3</span></button>
    <i class="peek"></i>
  </div>
</footer>
</body>
</html>
```
FILE: styles.css
```css
* { box-sizing: border-box; }
html, body { height: 100%; }
body { margin: 0; display: flex; flex-direction: column; background: #202124; color: #fff; font-family: "Open Sans", "Noto Sans", sans-serif; min-width: 1600px; }
button { border: 0; padding: 0; background: none; color: inherit; font: inherit; display: flex; align-items: center; justify-content: center; flex: none; }
svg { flex: none; display: block; }
.sprite { position: absolute; width: 0; height: 0; }

/* Browser chrome */
.browser { flex: none; background: #353535; border-bottom: 2px solid #5f5f5f; }
.tabstrip { display: flex; height: 53px; padding-left: 16px; background: #000; }
.tab { width: 114px; gap: 12px; padding-left: 12px; justify-content: flex-start; font-size: 18px; position: relative; }
.tab::after { content: ""; position: absolute; right: 0; top: 12px; height: 31px; width: 1px; background: #5a5a5a; }
.tab.active::after, .tab.last::after { display: none; }
.tab:first-child { margin-left: -2px; width: 116px; }
.fav { width: 25px; height: 25px; }
.fade { width: 58px; white-space: nowrap; text-align: left; mask-image: linear-gradient(90deg, #000 50%, transparent 95%); }
.mock { width: 25px; height: 25px; background: #333; display: flex; flex-direction: column; align-items: center; font: 9px/11px "Liberation Mono", monospace; color: #aaa; }
.mock b { font-size: 12px; color: #fff; }
.tab.active { width: 116px; background: #353535; border-radius: 12px 12px 0 0; gap: 0; padding-left: 13px; }
.tab.active::before { content: ""; position: absolute; left: -10px; right: -10px; bottom: 0; height: 10px; background: radial-gradient(circle at 0 0, transparent 10px, #353535 10px) left / 10px 10px no-repeat, radial-gradient(circle at 100% 0, transparent 10px, #353535 10px) right / 10px 10px no-repeat; }
.rec { width: 20px; height: 20px; margin-left: 18px; }
.x { width: 14px; height: 14px; margin-left: 9px; }
.newtab { width: 68px; }
.winctl { margin-left: auto; display: flex; align-items: flex-start; }
.winctl button { width: 72px; height: 46px; }
.winctl svg { width: 16px; height: 16px; }
.toolbar { display: flex; align-items: center; height: 56px; padding: 0 12px 0 9px; }
.nav { width: 50px; height: 44px; }
.nav svg, .tool svg { width: 22px; height: 22px; }
.omnibox { flex: 1; height: 44px; margin-left: 11px; border-radius: 22px; background: #202124; display: flex; align-items: center; padding: 0 17px 0 21px; }
.url { flex: 1; font-size: 21px; line-height: 28px; outline: 0; }
.path { color: #8b8c8e; }
.omnibox button { width: 50px; }
.omnibox button:last-child { width: 24px; margin-left: 13px; }
.omnibox svg { width: 23px; height: 23px; }
.omnibox .olock { width: 13px; height: 18px; color: #9aa0a6; margin-right: 19px; }
.tool { width: 50px; margin-left: 8px; }
.toolbar .tool:last-child { margin: 0; width: 44px; }
.profile { width: 34px; height: 34px; border-radius: 50%; background: #7e57c2; font: 18px Roboto, sans-serif; margin: 0 11px 0 9px; }

/* Meeting */
.meet { flex: 1; min-height: 0; display: flex; flex-direction: column; padding-top: 25px; font-family: Lato, sans-serif; }
.banner { height: 63px; margin: 0 24px 25px 25px; padding-left: 25px; border-radius: 12px; background: #3c4043; display: flex; align-items: center; gap: 25px; font-size: 24px; font-weight: 700; flex: none; }
.banner-av { width: 38px; height: 38px; border-radius: 50%; background: #5d4037; display: flex; align-items: center; justify-content: center; font: 500 20px Roboto, sans-serif; }
.stage { flex: 1; min-height: 0; display: flex; justify-content: center; position: relative; }
.share { height: 100%; aspect-ratio: 1090 / 682; border-radius: 14px; overflow: hidden; background: #fff; display: flex; flex-direction: column; position: relative; font-family: Inter, sans-serif; }

.saf-bar { height: 40px; flex: none; background: #38353b; display: grid; grid-template-columns: 286fr 466px 313fr; align-items: center; padding: 0 10px 3px 15px; position: relative; }
.saf-left, .saf-right, .saf-mid { display: flex; align-items: center; }
.saf-left { gap: 18px; }
.saf-left .mg { margin-left: -10px; }
.saf-mid { gap: 12px; }
.saf-right { justify-content: flex-end; gap: 14px; }
.saf-url { flex: 1; height: 20px; border: 1px solid #4b484f; border-radius: 6px; display: flex; align-items: center; justify-content: center; gap: 4px; font-size: 9px; font-weight: 600; position: relative; }
.saf-ext { position: absolute; right: 3px; display: flex; align-items: center; gap: 3px; }
.spot { position: absolute; right: 1px; top: 3px; width: 4px; height: 4px; border-radius: 50%; background: #d98a3a; }
.saf-tabs { height: 21px; flex: none; display: flex; background: #1e1c20; color: #a3a0a6; font-size: 8px; border-bottom: 1px solid #77757a; }
.saf-tabs > span { flex: 1 1 0; min-width: 0; display: flex; align-items: center; justify-content: center; gap: 4px; border-right: 1px solid #413e45; white-space: nowrap; padding-bottom: 1px; }
.saf-tabs .play { padding-left: 14px; }
.saf-tabs b { width: 12px; height: 12px; border-radius: 3px; background: #98959f; color: #fff; text-align: center; line-height: 12px; }
.saf-tabs .on { background: #38353b; color: #fff; border: 0; font-weight: 500; }

.editor { flex: 1; min-height: 0; color: #172b4d; position: relative; }
.ed-bar { height: 40px; display: flex; align-items: center; padding: 0 18px 0 14px; color: #42526e; font-size: 11px; }
.logo { width: 20px; height: 20px; margin-right: 15px; }
.ic { width: 24px; height: 24px; }
.ic svg, .drop svg, .invite svg { width: 14px; height: 14px; }
.ic b { font-size: 13px; }
.sep { width: 1px; height: 20px; background: #ebecf0; margin: 0 6px; flex: none; }
.style { width: 103px; padding-left: 14px; display: flex; align-items: center; gap: 7px; color: #a5adba; }
.style select { appearance: none; border: 0; background: none; padding: 0; margin: 0; font: 11px Inter, sans-serif; color: inherit; }
.drop { width: 37px; padding-left: 6px; justify-content: flex-start; gap: 3px; }
.drop svg.ch { width: 9px; height: 9px; }
.pale { color: #a5adba; }
.inserts { display: flex; }
.inserts .ic { width: 25px; }
.ins { padding-left: 2px; width: 34px; }
.sel { background: #253858; border-radius: 2px; }
.at { font-size: 13px; }
.saved { margin-left: auto; margin-right: 16px; color: #6b778c; font-size: 10px; }
.gs { width: 24px; height: 24px; border-radius: 50%; background: #de350b; color: #fff; font-size: 10px; font-weight: 600; display: flex; align-items: center; justify-content: center; position: relative; z-index: 1; }
.gs em { position: absolute; right: -1px; bottom: -1px; width: 10px; height: 10px; border-radius: 2px; background: #00b8d9; font: 600 7px/10px Inter, sans-serif; text-align: center; }
.invite { width: 24px; height: 24px; border-radius: 50%; background: #f1f2f4; margin-right: 12px; }
.unlock { margin: 0 11px 0 5px; }
.publish { width: 55px; height: 24px; border-radius: 2px; background: #0052cc; color: #fff; font-size: 11px; font-weight: 600; margin-right: 15px; }
.closebtn { margin-right: 15px; font-size: 10px; font-weight: 500; }

.doc { width: 574px; margin: 24px 0 0 254px; }
.crumbs { display: flex; align-items: center; height: 20px; gap: 9px; font-size: 10px; color: #5e6c84; white-space: nowrap; }
.crumbs a { color: inherit; text-decoration: none; }
.crumbs i { font-style: normal; }
.wide { width: 14px; height: 8px; margin: 0 2px 0 auto; }
.doc h1 { margin: 33px 0 0; font-size: 20px; line-height: 28px; font-weight: 400; }
.doc p { margin: 21px 0 7px; font-size: 12px; line-height: 20px; }
.doc ol { margin: 0; padding-left: 18px; list-style: none; counter-reset: item; font-size: 12px; line-height: 23px; }
.doc li { position: relative; counter-increment: item; }
.doc li::before { content: counter(item) "."; display: inline-block; width: 18px; margin-left: -18px; }
mark { background: #b3d4ff; color: inherit; padding: 1px 0; }
.comment { position: absolute; left: 24px; top: -9px; width: 104px; height: 25px; gap: 5px; background: #fff; border-radius: 3px; box-shadow: 0 3px 5px rgba(9,30,66,.16); color: #42526e; font-size: 10px; font-weight: 500; }
.comment svg { width: 15px; height: 15px; }
.help { position: absolute; left: 20px; bottom: 23px; width: 15px; height: 15px; border-radius: 50%; background: #6b778c; color: #fff; font-size: 11px; font-weight: 700; }

.pill { position: absolute; left: 50%; top: 45%; margin-left: -103px; width: 206px; height: 68px; border-radius: 34px; background: #8a8c8e; box-shadow: 0 1px 4px rgba(0,0,0,.3); display: flex; align-items: center; justify-content: space-around; }
.pill button { width: 64px; height: 64px; }
.pill svg { width: 34px; height: 34px; }

.self { position: absolute; right: 49px; bottom: 24px; width: 367px; height: 206px; border-radius: 12px; background: #4a4e50; box-shadow: 0 2px 12px rgba(0,0,0,.25); display: flex; align-items: center; justify-content: center; }
.self-av { width: 110px; height: 110px; border-radius: 50%; background: #7e57c2; display: flex; align-items: center; justify-content: center; font: 60px Roboto, sans-serif; }
.self-mic { position: absolute; right: 19px; top: 19px; width: 40px; height: 40px; border-radius: 50%; background: #3c3f42; display: flex; align-items: center; justify-content: center; }
.self-name { position: absolute; left: 19px; bottom: 19px; font-size: 22px; line-height: 28px; font-weight: 700; text-shadow: 0 1px 3px rgba(0,0,0,.6); }

.controls { height: 124px; flex: none; display: grid; grid-template-columns: 1fr auto 1fr; align-items: center; padding: 2px 18px 0 37px; }
.info { display: flex; align-items: center; gap: 19px; font-size: 26px; font-weight: 700; }
.info time { font-size: 25px; }
.info i { width: 1px; height: 25px; background: #bbb; }
.buttons { display: flex; gap: 18px; margin-right: 19px; }
.rnd { width: 63px; height: 63px; border-radius: 50%; background: #3c4043; }
.red { background: #ea4335; }
.leave { width: 88px; border-radius: 32px; }
.s30 { width: 30px; height: 30px; }
.s38 { width: 38px; height: 38px; }
.panels { display: flex; justify-content: flex-end; }
.panels button { width: 75px; height: 75px; position: relative; }
.panels svg { width: 38px; height: 38px; }
.badge { position: absolute; left: 39px; top: -14px; width: 41px; height: 31px; border-radius: 16px; background: #5f6368; font-size: 18px; line-height: 31px; font-weight: 700; text-align: center; }
.dot { position: absolute; left: 44px; top: 9px; width: 13px; height: 13px; border-radius: 50%; background: #8ab4f8; }

/* Taskbar */
.taskbar { height: 50px; flex: none; display: flex; background: #211f1e; }
.start { width: 60px; }
.start svg { width: 20px; height: 20px; }
.search { width: 360px; height: 50px; background: #333; border: 1px solid #5c5c5c; border-right: 0; display: flex; align-items: center; padding-left: 14px; }
.search input { flex: 1; min-width: 0; margin-left: 14px; padding: 0; border: 0; background: none; outline: 0; color: #fff; font: 18px "Open Sans", sans-serif; }
.search input::placeholder { color: #c6c6c6; opacity: 1; }
.art { width: 100px; height: 50px; }
.apps { display: flex; }
.app { width: 62px; height: 50px; position: relative; }
.app svg { width: 30px; height: 30px; }
.tv { width: 60px; margin-right: 3px; }
.app.tv svg { width: 22px; height: 20px; }
.run::after { content: ""; position: absolute; left: 6px; right: 5px; bottom: 0; height: 3px; background: #b4b4b4; }
.cur { background: #4d4b4b; }
.cur::after { left: 0; right: 0; }
.mini { position: absolute; right: 13px; bottom: 8px; width: 20px; height: 20px; border-radius: 50%; background: #7e57c2; font: 12px/20px Roboto, sans-serif; }
.tray { margin-left: auto; display: flex; align-items: center; font-size: 16px; }
.t30, .moon { width: 30px; height: 28px; }
.moon { margin: 0 10px 0 32px; }
.temp { width: 66px; font-size: 17px; }
.ti { width: 20px; height: 20px; margin-right: 10px; }
.lang { width: 40px; font-size: 15px; }
.clock { display: flex; flex-direction: column; align-items: center; width: 92px; font-size: 15px; line-height: 23px; }
.notif { width: 60px; height: 50px; position: relative; }
.notif svg { width: 22px; height: 22px; margin-right: 8px; }
.notif span { position: absolute; left: 28px; top: 24px; width: 20px; height: 20px; border: 1px solid #999; border-radius: 50%; background: #2b2b2b; font-size: 13px; line-height: 18px; text-align: center; }
.peek { width: 1px; height: 50px; background: #777; margin-right: 5px; }
```
